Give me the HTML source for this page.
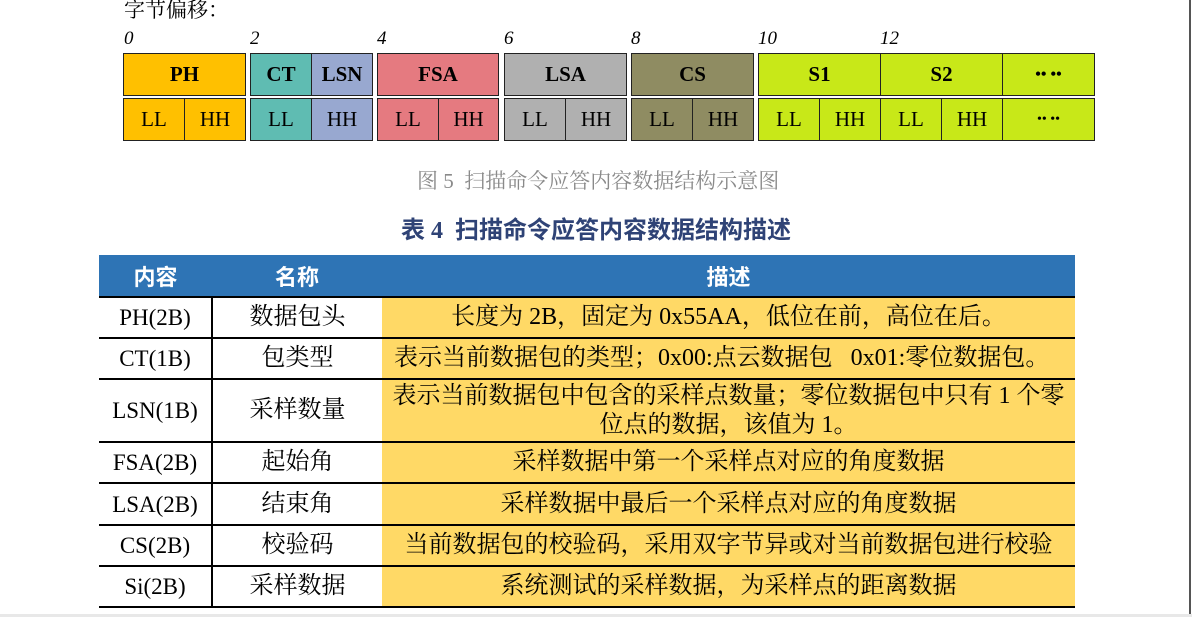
<!DOCTYPE html>
<html><head><meta charset="utf-8"><style>
body{margin:0;width:1192px;height:617px;background:#fff;position:relative;overflow:hidden;font-family:"Liberation Serif","Noto Serif CJK SC",serif;color:#000}
.a{position:absolute}
.b{position:absolute;box-sizing:border-box;border:1.5px solid #222;display:flex;align-items:center;justify-content:center;font-size:21px}
.bold{font-weight:bold}
.n{position:absolute;top:28px;font-style:italic;font-size:19px}
table{position:absolute;left:99px;top:255px;border-collapse:collapse;font-size:24px;width:976px;table-layout:fixed}
td{border-top:2px solid #000;text-align:center;padding:0;line-height:27px;white-space:nowrap}
td.c1{border-right:2px solid #000;font-size:23px}
td.c3{background:#ffd966}
th{background:#2e74b5;color:#fff;height:41px;font-weight:bold;font-family:"Liberation Sans","Noto Sans CJK SC",sans-serif;font-size:22px;padding:0}
</style></head><body>
<div class="a" style="left:124px;top:-2px;font-size:21px;line-height:24px">字节偏移：</div>
<div class="n" style="left:124px">0</div>
<div class="n" style="left:250px">2</div>
<div class="n" style="left:377px">4</div>
<div class="n" style="left:504px">6</div>
<div class="n" style="left:631px">8</div>
<div class="n" style="left:758px">10</div>
<div class="n" style="left:880px">12</div>

<div class="b bold" style="left:123px;top:53px;width:123px;height:43px;background:#ffc000">PH</div>
<div class="b" style="left:123px;top:98px;width:62px;height:43px;background:#ffc000">LL</div>
<div class="b" style="left:184px;top:98px;width:62px;height:43px;background:#ffc000">HH</div>

<div class="b bold" style="left:250px;top:53px;width:62px;height:43px;background:#5fbcb2">CT</div>
<div class="b bold" style="left:311px;top:53px;width:62px;height:43px;background:#98a8d0">LSN</div>
<div class="b" style="left:250px;top:98px;width:62px;height:43px;background:#5fbcb2">LL</div>
<div class="b" style="left:311px;top:98px;width:62px;height:43px;background:#98a8d0">HH</div>

<div class="b bold" style="left:377px;top:53px;width:122px;height:43px;background:#e57a80">FSA</div>
<div class="b" style="left:377px;top:98px;width:62px;height:43px;background:#e57a80">LL</div>
<div class="b" style="left:438px;top:98px;width:61px;height:43px;background:#e57a80">HH</div>

<div class="b bold" style="left:504px;top:53px;width:123px;height:43px;background:#b0b0b0">LSA</div>
<div class="b" style="left:504px;top:98px;width:62px;height:43px;background:#b0b0b0">LL</div>
<div class="b" style="left:565px;top:98px;width:62px;height:43px;background:#b0b0b0">HH</div>

<div class="b bold" style="left:631px;top:53px;width:123px;height:43px;background:#8f8c62">CS</div>
<div class="b" style="left:631px;top:98px;width:62px;height:43px;background:#8f8c62">LL</div>
<div class="b" style="left:692px;top:98px;width:62px;height:43px;background:#8f8c62">HH</div>

<div class="b bold" style="left:758px;top:53px;width:123px;height:43px;background:#c8e818">S1</div>
<div class="b bold" style="left:880px;top:53px;width:123px;height:43px;background:#c8e818">S2</div>
<div class="b bold" style="left:1002px;top:53px;width:93px;height:43px;background:#c8e818;font-size:16px">•• ••</div>
<div class="b" style="left:758px;top:98px;width:62px;height:43px;background:#c8e818">LL</div>
<div class="b" style="left:819px;top:98px;width:62px;height:43px;background:#c8e818">HH</div>
<div class="b" style="left:880px;top:98px;width:62px;height:43px;background:#c8e818">LL</div>
<div class="b" style="left:941px;top:98px;width:62px;height:43px;background:#c8e818">HH</div>
<div class="b" style="left:1002px;top:98px;width:93px;height:43px;background:#c8e818;font-size:14px">•• ••</div>

<div class="a" style="left:417px;top:168px;font-size:21px;color:#8a8a8a;line-height:26px;white-space:nowrap">图 5&nbsp; 扫描命令应答内容数据结构示意图</div>
<div class="a" style="left:401px;top:216px;font-size:24px;color:#2f4376;font-weight:bold;line-height:30px;white-space:nowrap;font-family:'Liberation Serif','Noto Sans CJK SC',serif">表 4&nbsp; 扫描命令应答内容数据结构描述</div>

<table>
<colgroup><col style="width:113px"><col style="width:170px"><col style="width:693px"></colgroup>
<tr><th>内容</th><th>名称</th><th>描述</th></tr>
<tr style="height:41px"><td class="c1">PH(2B)</td><td class="c2">数据包头</td><td class="c3">长度为 2B，固定为 0x55AA，低位在前，高位在后。</td></tr>
<tr style="height:41px"><td class="c1">CT(1B)</td><td class="c2">包类型</td><td class="c3" style="text-align:left;padding-left:12px">表示当前数据包的类型；0x00:点云数据包&nbsp;&nbsp;&nbsp;0x01:零位数据包。</td></tr>
<tr style="height:63px"><td class="c1">LSN(1B)</td><td class="c2">采样数量</td><td class="c3" style="line-height:29px">表示当前数据包中包含的采样点数量；零位数据包中只有 1 个零<br>位点的数据，该值为 1。</td></tr>
<tr style="height:41px"><td class="c1">FSA(2B)</td><td class="c2">起始角</td><td class="c3">采样数据中第一个采样点对应的角度数据</td></tr>
<tr style="height:42px"><td class="c1">LSA(2B)</td><td class="c2">结束角</td><td class="c3">采样数据中最后一个采样点对应的角度数据</td></tr>
<tr style="height:41px"><td class="c1">CS(2B)</td><td class="c2">校验码</td><td class="c3">当前数据包的校验码，采用双字节异或对当前数据包进行校验</td></tr>
<tr style="height:41px;border-bottom:2px solid #000"><td class="c1">Si(2B)</td><td class="c2">采样数据</td><td class="c3">系统测试的采样数据，为采样点的距离数据</td></tr>
</table>

<div class="a" style="left:1189px;top:0;width:2px;height:614px;background:#555"></div>
<div class="a" style="left:0;top:614px;width:1192px;height:3px;background:#e8e8e8"></div>
</body></html>
